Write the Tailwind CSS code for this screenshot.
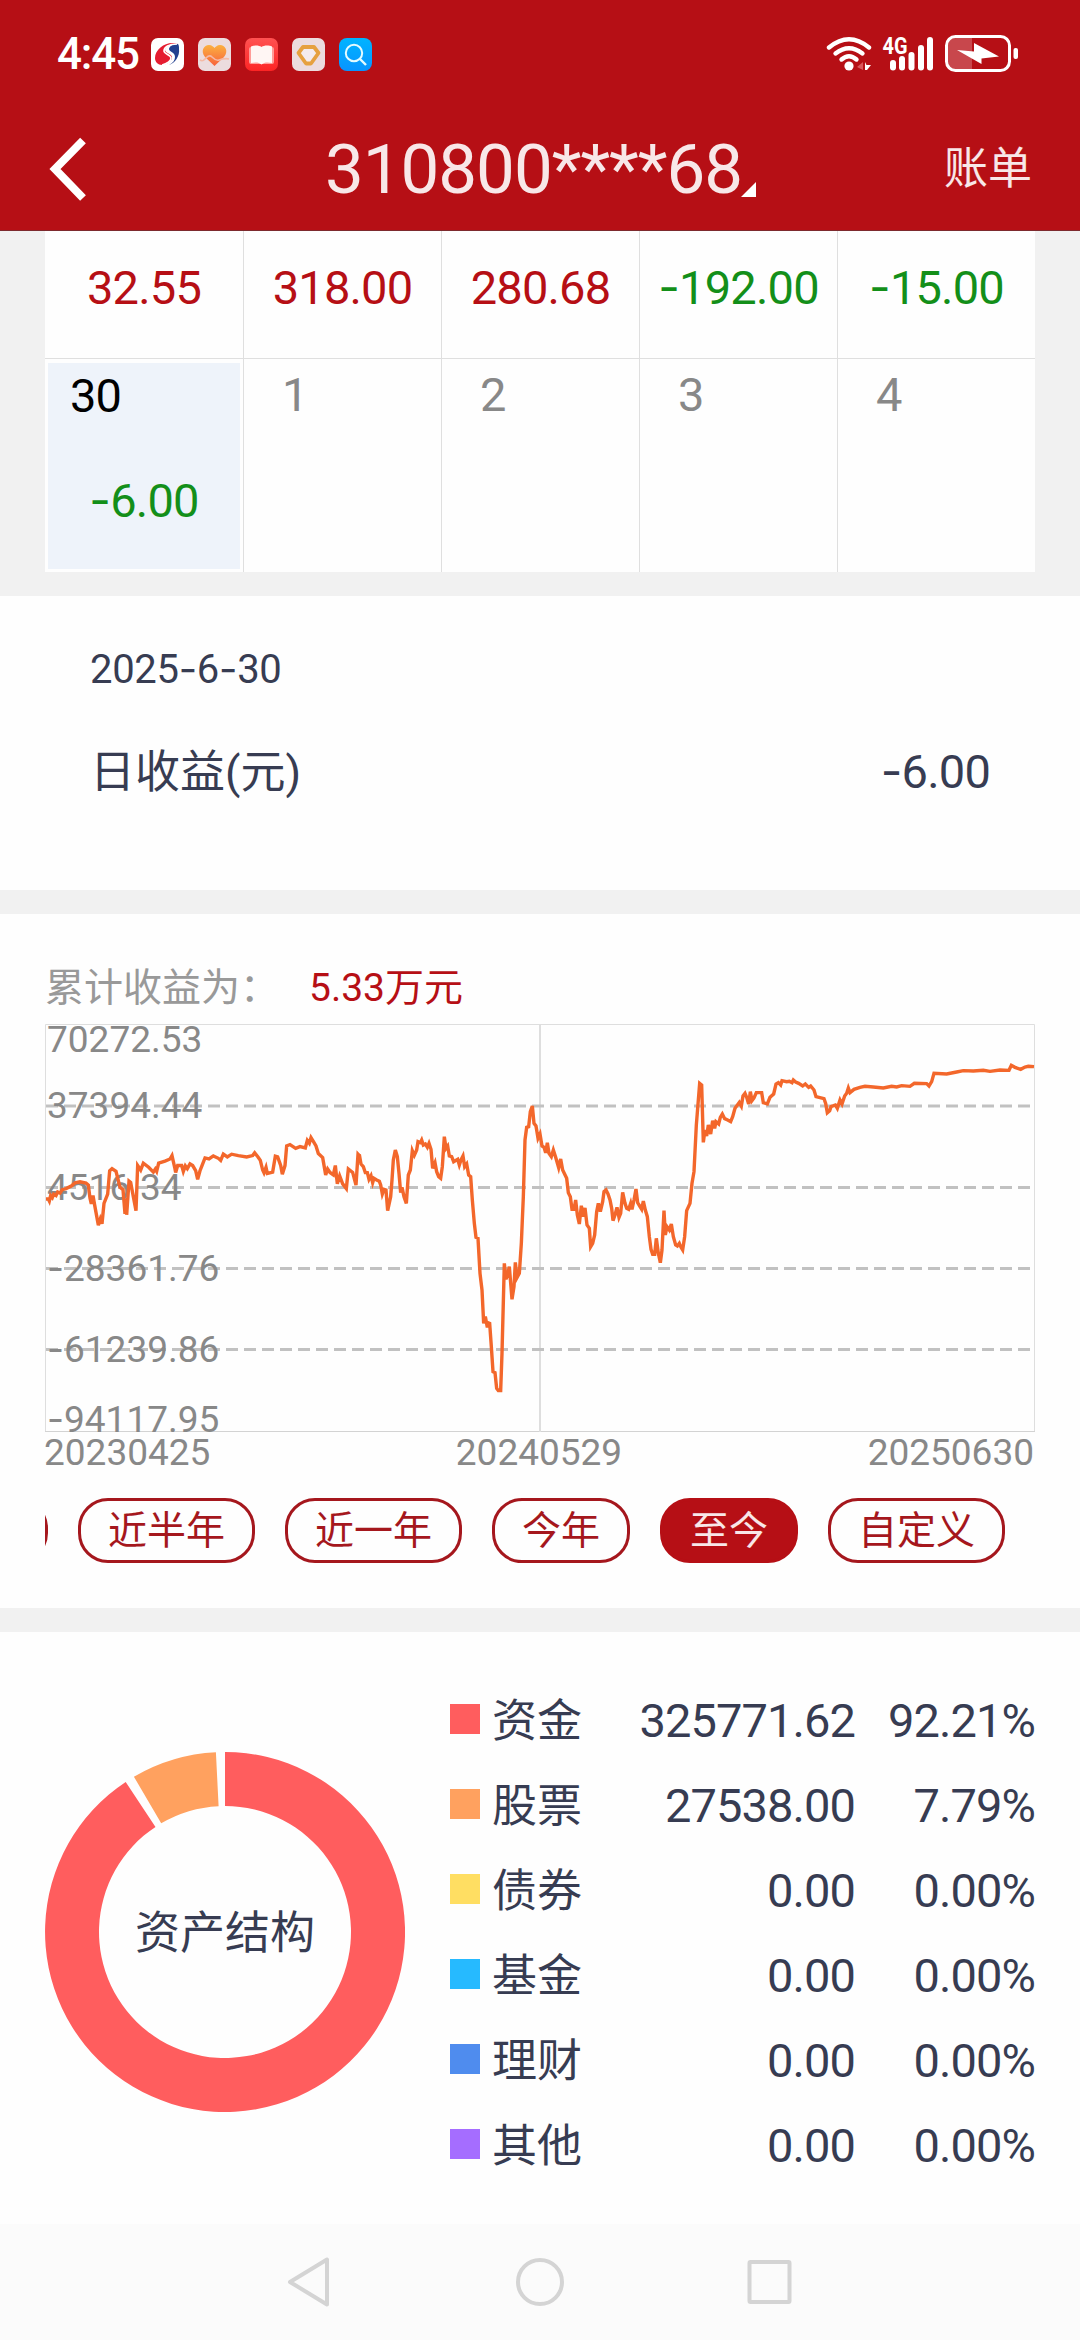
<!DOCTYPE html>
<html lang="zh-CN">
<head>
<meta charset="utf-8">
<title>账单</title>
<script src="https://cdn.jsdelivr.net/npm/@tailwindcss/browser@4"></script>
</head>
<body class="w-[1080px] h-[2340px] overflow-hidden bg-[#f1f1f1] font-[Roboto,'Noto_Sans_CJK_SC',sans-serif] text-[#373c52]">
<div class="w-[1080px] h-[2340px] flex flex-col">

<header class="h-[231px] shrink-0 bg-[#b60f15] border-b border-[#7d2a2e] text-white">
  <!-- status bar -->
  <div class="h-[108px] flex items-center pl-[57px] pr-[62px]">
    <div class="w-[94px] text-[44px] leading-[60px] font-medium tracking-[-1.2px]">4:45</div>
    <div class="flex gap-[14px]">
      <svg width="33" height="33" viewBox="0 0 33 33"><rect width="33" height="33" rx="7" fill="#fff"/><path d="M27 6C17 2 4 10 4 20c0 4 3 7 7 7 5 0 10-4 10-8 0-3-7-4-7-7 0-3 5-6 13-6z" fill="#e51c30"/><path d="M27 6c-6 0-9 3-9 5 0 3 6 3 6 8 0 3-2 6-6 8 6-2 11-9 10-16 0-2 0-4-1-5z" fill="#23418f"/><path d="M26 6C18 6 13 9 13 13c0 3 7 4 7 7 0 3-4 6-9 7" fill="none" stroke="#fff" stroke-width="1.6"/></svg>
      <svg width="33" height="33" viewBox="0 0 33 33"><defs><linearGradient id="h" x1="0" y1="0" x2="0" y2="1"><stop offset="0" stop-color="#fbb040"/><stop offset="1" stop-color="#f8623c"/></linearGradient></defs><rect width="33" height="33" rx="7" fill="#ecdcde"/><path d="M16.500 28L7 19C2 13 6 7 11 7c3 0 4.500 2 5.500 3 1-1 2.500-3 5.500-3 5 0 9 6 4 12z" fill="url(#h)"/><path d="M2 22c3 2 4 0 6-2s4-3 6-1 4 4 7 3 6-2 10-1" fill="none" stroke="#f4b9a6" stroke-width="1.600"/></svg>
      <svg width="33" height="33" viewBox="0 0 33 33"><defs><linearGradient id="b" x1="0" y1="0" x2="0" y2="1"><stop offset="0" stop-color="#ff5252"/><stop offset="1" stop-color="#fd2424"/></linearGradient></defs><rect width="33" height="33" rx="7" fill="url(#b)"/><rect x="4" y="9" width="25" height="17" rx="2" fill="#ff9c98"/><path d="M6 8.500C9 7 14 7 16.500 9 19 7 24 7 27 8.500V25c-4-1-8-1-10.500 1.500C14 24 10 24 6 25z" fill="#fff6f4"/></svg>
      <svg width="33" height="33" viewBox="0 0 33 33"><rect width="33" height="33" rx="7" fill="#ecdcde"/><path d="M11 9h11l4.500 6-7.500 10.500h-5L6.500 15z" fill="#f4ecee" stroke="#e6a13f" stroke-width="3.800" stroke-linejoin="round"/></svg>
      <svg width="33" height="33" viewBox="0 0 33 33"><defs><linearGradient id="s" x1="0" y1="0" x2="0" y2="1"><stop offset="0" stop-color="#00b4ff"/><stop offset="1" stop-color="#0894ff"/></linearGradient></defs><rect width="33" height="33" rx="8" fill="url(#s)"/><circle cx="15" cy="15" r="8.200" fill="none" stroke="#e4fbff" stroke-width="2"/><path d="M21 21l6 6" stroke="#e4fbff" stroke-width="2.400"/></svg>
    </div>
    <svg class="ml-auto" width="192" height="40" viewBox="826 34 192 40">
      <g fill="none" stroke="#fff" stroke-width="4.400" stroke-linecap="round"><path d="M829 47.500Q849 31 869 47.500"/><path d="M835.500 53.500Q849 43 862.500 53.500"/><path d="M841.500 59.500Q849 53 856.500 59.500"/></g>
      <circle cx="849" cy="66" r="4.600" fill="#fff"/>
      <path d="M863 62v8l-6-3z" fill="#d9575c"/><path d="M865 62l1.500 3h4.500l-4 5h-2z" fill="#fff"/>
      <text x="882.500" y="54" font-family="Roboto" font-size="23" font-weight="700" fill="#fff" textLength="25" lengthAdjust="spacingAndGlyphs">4G</text>
      <g fill="#fff"><rect x="890" y="60" width="6" height="10.500" rx="3"/><rect x="899" y="56" width="6" height="14.500" rx="3"/><rect x="908.500" y="52" width="6" height="18.500" rx="3"/><rect x="918" y="45" width="6" height="25.500" rx="3"/><rect x="927" y="37" width="6" height="33.500" rx="3"/></g>
      <path d="M956 38h16v32h-16q-8 0-8-8V46q0-8 8-8z" fill="#c8474c"/>
      <rect x="946.500" y="36.500" width="63" height="34" rx="9" fill="none" stroke="#fff" stroke-width="3"/>
      <rect x="1013.500" y="48" width="4.500" height="11" rx="2" fill="#fff"/>
      <path d="M957 50l17 1.500V43l25 13.500-17.500 2V64z" fill="#fff"/>
    </svg>
  </div>
  <!-- title bar -->
  <div class="h-[122px] flex items-center pl-[47px] pr-[48px] relative">
    <svg width="42" height="64" viewBox="47 136 42 64"><path d="M83 139.500L55 168l28 29" fill="none" stroke="#fff" stroke-width="8"/></svg>
    <div class="absolute left-[325px] top-[16px] text-[69px] leading-[92px] tracking-[-1px] text-white/90">310800****68</div>
    <svg class="absolute left-[741px] top-[74px]" width="15" height="15"><path d="M15 0v15H0z" fill="#fff"/></svg>
    <div class="ml-auto text-[44px] leading-[60px] text-white/90">账单</div>
  </div>
</header>

<!-- calendar -->
<section class="h-[365px] shrink-0 px-[45px]">
  <div class="h-[341px] bg-[#fefefe] grid grid-cols-5 grid-rows-[128px_213px] text-[47px] leading-[60px] tracking-[-0.8px]">
    <div class="border-b border-[#dfdfdf] pt-[27px] text-center text-[#b60f15]">32.55</div>
    <div class="border-b border-l border-[#dfdfdf] pt-[27px] text-center text-[#b60f15]">318.00</div>
    <div class="border-b border-l border-[#dfdfdf] pt-[27px] text-center text-[#b60f15]">280.68</div>
    <div class="border-b border-l border-[#dfdfdf] pt-[27px] text-center text-[#138f19]"><span class="font-[Inter] leading-none">-</span>192.00</div>
    <div class="border-b border-l border-[#dfdfdf] pt-[27px] text-center text-[#138f19]"><span class="font-[Inter] leading-none">-</span>15.00</div>
    <div class="p-[3px] pt-[4px]"><div class="h-[206px] bg-[#eef3fa]">
      <div class="pl-[22px] pt-[3px] text-black">30</div>
      <div class="pt-[45px] text-center text-[#138f19]"><span class="font-[Inter] leading-none">-</span>6.00</div>
    </div></div>
    <div class="border-l border-[#dfdfdf] pt-[6px] pl-[38px] text-[#888]">1</div>
    <div class="border-l border-[#dfdfdf] pt-[6px] pl-[38px] text-[#888]">2</div>
    <div class="border-l border-[#dfdfdf] pt-[6px] pl-[38px] text-[#888]">3</div>
    <div class="border-l border-[#dfdfdf] pt-[6px] pl-[38px] text-[#888]">4</div>
  </div>
</section>

<!-- daily profit -->
<section class="h-[294px] shrink-0 bg-[#fefefe] px-[90px] pt-[49px]">
  <div class="text-[40px] leading-[50px] tracking-[-0.3px]">2025<span class="font-[Inter] leading-none">-</span>6<span class="font-[Inter] leading-none">-</span>30</div>
  <div class="mt-[46px] flex justify-between items-center leading-[60px]">
    <div class="text-[45px] pt-[2px]">日收益(元)</div>
    <div class="text-[47px] tracking-[-0.8px]"><span class="font-[Inter] leading-none">-</span>6.00</div>
  </div>
</section>

<!-- cumulative profit -->
<section class="mt-[24px] h-[694px] shrink-0 bg-[#fefefe] px-[45px]">
  <div class="h-[110px] pt-[49px] flex text-[39px] leading-[50px]">
    <div class="w-[264px] text-[#999]">累计收益为：</div>
    <div class="text-[#b60f15]">5.33万元</div>
  </div>
  <div class="relative h-[408px]">
    <svg class="absolute left-0 top-0" width="990" height="408" viewBox="45 1024 990 408" fill="none">
      <path d="M45.500 1432V1024.500H1034.500V1432" stroke="#dedede"/>
      <path d="M45 1431.500H1035" stroke="#d3d3d3"/>
      <path d="M540 1024V1432" stroke="#dedede" stroke-width="2"/>
      <path d="M46 1106H1034M46 1187.500H1034M46 1268.500H1034M46 1349.500H1034" stroke="#c1c1c1" stroke-width="3" stroke-dasharray="12 6"/>
    </svg>
    <div class="absolute left-[2px] top-0 text-[37px] leading-[40px] text-[#888]">
      <div class="absolute top-[-4px]">70272.53</div>
      <div class="absolute top-[62px]">37394.44</div>
      <div class="absolute top-[144px]">4516.34</div>
      <div class="absolute top-[225px] whitespace-nowrap"><span class="font-[Inter] leading-none">-</span>28361.76</div>
      <div class="absolute top-[306px] whitespace-nowrap"><span class="font-[Inter] leading-none">-</span>61239.86</div>
      <div class="absolute top-[376px] whitespace-nowrap"><span class="font-[Inter] leading-none">-</span>94117.95</div>
    </div>
    <svg class="absolute left-0 top-0" width="990" height="408" viewBox="45 1024 990 408" fill="none" stroke="#f3672b" stroke-width="3.400">
      <polyline vector-effect="non-scaling-stroke" transform="translate(30 940) scale(.33333 .34435)" points="48,752 55,752 58,758 62,742 67,748 71,738 78,742 83,732 90,735 97,725 108,722 125,714 135,705 150,702 168,706 175,712 180,750 184,766 189,742 194,770 205,828 211,810 216,824 222,765 233,738 239,670 246,664 258,672 270,718 279,725 285,795 288,750 290,798 297,700 302,704 308,735 318,786 323,655 332,668 340,648 356,660 370,674 376,665 380,672 386,648 405,642 420,636 426,626 434,660 437,675 443,655 455,655 460,672 466,656 472,664 480,650 488,655 497,670 503,695 510,670 516,655 525,633 537,636 550,627 565,634 572,640 580,622 592,630 605,622 625,626 650,630 668,626 674,618 684,630 691,640 698,668 702,676 708,660 712,678 728,674 736,628 743,630 752,655 757,680 765,655 770,598 780,594 797,605 810,600 826,604 832,582 838,590 843,574 850,585 858,598 865,620 878,632 887,682 893,665 900,675 910,682 916,655 922,708 929,685 938,708 949,722 955,665 968,675 978,712 984,622 990,628"/>
      <polyline vector-effect="non-scaling-stroke" transform="translate(360 1010) scale(.33333)" points="-2,434 3,462 10,470 16,488 22,488 27,508 33,497 38,518 42,505 50,510 58,514 62,525 67,552 72,538 78,540 83,602 92,560 96,510 100,450 106,420 112,440 117,490 122,548 126,532 132,560 139,580 145,495 151,480 157,422 163,436 170,420 174,395 181,398 185,390 190,405 196,402 202,412 207,400 213,418 218,475 225,458 230,485 236,500 242,505 247,470 253,380 258,415 263,408 268,438 275,440 281,455 293,448 298,465 303,450 309,438 314,470 320,462 326,495 332,500 337,570 343,640 348,682 354,685 360,790 366,840 371,940 376,920 382,952 384,938 389,940 394,1010 399,1085 405,1088 410,1135 415,1142 422,1142 426,1030 433,760 438,808 444,790 448,770 456,868 462,830 466,757 471,803 478,790 484,700 490,560 495,390 500,352 506,350 511,305 517,288 522,340 528,348 534,385 540,372 546,408 552,412 557,428 562,398 567,430 574,440 580,420 587,442 596,473 602,447 608,480 620,505 625,548 631,560 636,598 642,598 647,570 652,615 658,642 664,587 669,620 675,594 681,645 688,655 692,710 698,700 704,675 710,605 715,580 721,605 728,575 732,545 738,540 744,552 750,570 755,595 759,632 765,615 771,592 777,622 782,610 788,547 795,580 800,595 806,598 812,580 816,598 822,570 828,537 833,578 840,590 845,598 850,573 856,600 862,620 868,680 873,718 878,733 884,733 889,685 895,730 901,758 906,720 912,602 916,675 921,650 928,660 934,642 940,680 947,705 952,708 958,700 963,712 968,720 974,680 980,602 990,580 996,520 1002,485 1009,345 1019,220 1025,225 1030,397 1035,360 1040,378 1045,345 1052,372 1058,332 1064,355 1068,335 1076,342 1081,322 1087,312 1094,326 1103,330 1112,335 1118,320 1125,295 1138,277 1144,288 1149,258 1155,250 1160,262 1166,282 1171,245 1176,272 1182,264 1189,248 1205,248 1210,278 1222,282 1230,262 1241,252 1248,222 1255,218 1262,225 1266,212 1280,215 1288,214 1296,218 1300,210 1307,216 1316,220 1328,228 1336,222 1346,232 1352,228 1362,240 1368,260 1392,266 1397,280 1402,308 1409,302 1413,290 1426,285 1432,295 1440,270 1446,282 1454,258 1460,250 1465,234 1470,248 1482,238 1500,232 1515,229 1540,231 1570,234 1595,229 1610,231 1625,227 1650,229 1663,220 1700,221 1707,228 1715,215 1722,190 1760,192 1790,186 1810,182 1840,183 1870,181 1890,184 1920,180 1947,181 1954,166 1965,172 1982,178 1995,171 2005,169 2022,170"/>
    </svg>
  </div>
  <div class="pt-px h-[40px] flex justify-between text-[37px] leading-[40px] text-[#888] -mx-[1px] pr-[2px]"><span>20230425</span><span>20240529</span><span>20250630</span></div>
  <div class="mt-[26px] flex gap-[30px] overflow-hidden text-[39px] leading-[57px] text-[#a5171d] whitespace-nowrap">
    <div class="w-[138px] -ml-[135px] shrink-0 rounded-[30px] border-[3px] border-[#a5171d]"></div>
    <div class="w-[177px] pt-[2px] shrink-0 rounded-[30px] border-[3px] border-[#a5171d] text-center">近半年</div>
    <div class="w-[177px] pt-[2px] shrink-0 rounded-[30px] border-[3px] border-[#a5171d] text-center">近一年</div>
    <div class="w-[138px] pt-[2px] shrink-0 rounded-[30px] border-[3px] border-[#a5171d] text-center">今年</div>
    <div class="w-[138px] pt-[2px] shrink-0 rounded-[30px] border-[3px] border-[#b60f15] bg-[#b60f15] text-center text-white/90">至今</div>
    <div class="w-[177px] pt-[2px] shrink-0 rounded-[30px] border-[3px] border-[#a5171d] text-center">自定义</div>
  </div>
</section>

<!-- asset structure -->
<section class="mt-[24px] h-[592px] shrink-0 bg-[#fefefe] flex pl-[45px] pr-[45px]">
  <div class="w-[360px] h-[360px] mt-[120px] grid place-items-center">
    <svg class="col-start-1 row-start-1" width="360" height="360" viewBox="-180 -180 360 360">
      <path d="M0-180A180 180 0 1 1-99.300-150.100L-69.500-105.100A126 126 0 1 0 0-126z" fill="#ff5d5e"/>
      <path d="M-91.100-155.300A180 180 0 0 1-9.100-179.800L-6.400-125.800A126 126 0 0 0-63.800-108.700z" fill="#ffa15f"/>
    </svg>
    <div class="col-start-1 row-start-1 pt-[3px] text-[45px] leading-[60px]">资产结构</div>
  </div>
  <div class="ml-[45px] mt-[46px] flex-1 text-[47px] tracking-[-0.9px] leading-[85px]">
    <div class="flex h-[85px] items-center"><i class="size-[30px] mt-[-3px] bg-[#ff5d5e]"></i><span class="ml-[12px] pt-[2px] text-[45px] tracking-normal">资金</span><span class="ml-auto">325771.62</span><span class="w-[180px] text-right">92.21%</span></div>
    <div class="flex h-[85px] items-center"><i class="size-[30px] mt-[-3px] bg-[#ffa15f]"></i><span class="ml-[12px] pt-[2px] text-[45px] tracking-normal">股票</span><span class="ml-auto">27538.00</span><span class="w-[180px] text-right">7.79%</span></div>
    <div class="flex h-[85px] items-center"><i class="size-[30px] mt-[-3px] bg-[#ffde62]"></i><span class="ml-[12px] pt-[2px] text-[45px] tracking-normal">债券</span><span class="ml-auto">0.00</span><span class="w-[180px] text-right">0.00%</span></div>
    <div class="flex h-[85px] items-center"><i class="size-[30px] mt-[-3px] bg-[#26baff]"></i><span class="ml-[12px] pt-[2px] text-[45px] tracking-normal">基金</span><span class="ml-auto">0.00</span><span class="w-[180px] text-right">0.00%</span></div>
    <div class="flex h-[85px] items-center"><i class="size-[30px] mt-[-3px] bg-[#4f8cee]"></i><span class="ml-[12px] pt-[2px] text-[45px] tracking-normal">理财</span><span class="ml-auto">0.00</span><span class="w-[180px] text-right">0.00%</span></div>
    <div class="flex h-[85px] items-center"><i class="size-[30px] mt-[-3px] bg-[#a56dff]"></i><span class="ml-[12px] pt-[2px] text-[45px] tracking-normal">其他</span><span class="ml-auto">0.00</span><span class="w-[180px] text-right">0.00%</span></div>
  </div>
</section>

<!-- navigation bar -->
<nav class="h-[116px] shrink-0 bg-[#fbfbfb]">
  <svg width="1080" height="116" viewBox="0 2224 1080 116" fill="none" stroke="#d4d4d4" stroke-width="4" stroke-linejoin="round"><path d="M290 2282l37-22.500v45z"/><circle cx="540" cy="2282" r="22"/><rect x="749.500" y="2262" width="40" height="40" rx="1"/></svg>
</nav>
</div>
</body>
</html>
